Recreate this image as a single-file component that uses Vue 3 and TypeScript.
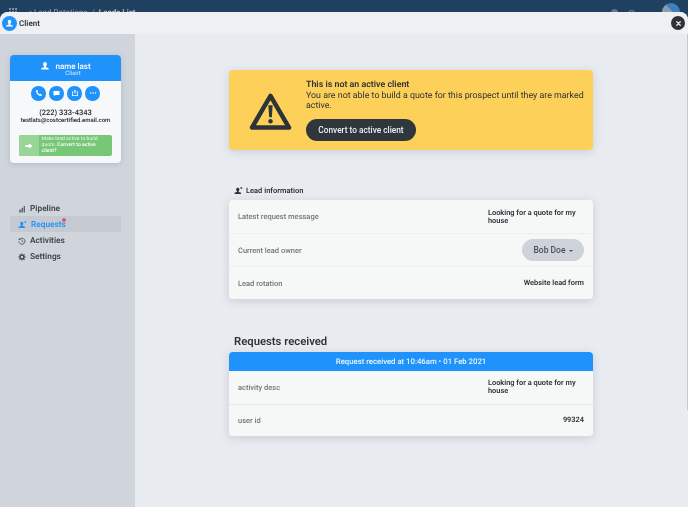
<script setup lang="ts">
interface InfoRow {
  label: string
  value: string
}

const leadRows: InfoRow[] = [
  { label: 'Latest request message', value: 'Looking for a quote for my house' },
  { label: 'Current lead owner', value: '' },
  { label: 'Lead rotation', value: 'Website lead form' }
]

const requestRows: InfoRow[] = [
  { label: 'activity desc', value: 'Looking for a quote for my house' },
  { label: 'user id', value: '99324' }
]
</script>

<template>
  <div class="page">
    <!-- dimmed app bar behind the modal -->
    <div class="app-bar">
      <svg class="grid-icon" viewBox="0 0 8 8" width="8" height="8">
        <rect x="0" y="0" width="2" height="2" /><rect x="3" y="0" width="2" height="2" /><rect x="6" y="0" width="2" height="2" />
        <rect x="0" y="3" width="2" height="2" /><rect x="3" y="3" width="2" height="2" /><rect x="6" y="3" width="2" height="2" />
        <rect x="0" y="6" width="2" height="2" /><rect x="3" y="6" width="2" height="2" /><rect x="6" y="6" width="2" height="2" />
      </svg>
      <span class="crumb">&lt; Lead Rotations &nbsp;/&nbsp; <b>Leads List</b></span>
      <span class="bar-right">
        <span class="bar-dot"></span>
        <span class="bar-ring"></span>
        <span class="bar-avatar"></span>
      </span>
    </div>

    <div class="modal">
      <header class="modal-head">
        <span class="head-badge">
          <svg viewBox="0 0 16 16" width="9" height="9"><path d="M8 1.500c1.900 0 3 1.300 3 3.200 0 1.700-.8 3.200-1.600 3.900v1.100c0 .6 3.600 1 4.600 2.300v1.500H2V12c1-1.300 4.600-1.700 4.600-2.300V8.600C5.800 7.900 5 6.400 5 4.700c0-1.900 1.100-3.200 3-3.200z" fill="#fff" /></svg>
        </span>
        <span class="head-title">Client</span>
        <button class="close-btn">
          <svg viewBox="0 0 8 8" width="5" height="5"><path d="M1.200 1.200l5.600 5.600M6.800 1.200L1.200 6.800" stroke="#e8ebf0" stroke-width="2" stroke-linecap="round" /></svg>
        </button>
      </header>

      <div class="modal-body">
        <aside class="sidebar">
          <div class="contact-card">
            <div class="contact-top">
              <svg class="contact-user" viewBox="0 0 16 16" width="10" height="10"><path d="M8 1.500c1.900 0 3 1.300 3 3.200 0 1.700-.8 3.200-1.600 3.900v1.100c0 .6 3.600 1 4.600 2.300v1.500H2V12c1-1.300 4.600-1.700 4.600-2.300V8.600C5.800 7.900 5 6.400 5 4.700c0-1.900 1.100-3.200 3-3.200z" fill="#fff" /></svg>
              <div class="contact-names">
                <div class="contact-name">name last</div>
                <div class="contact-role">Client</div>
              </div>
            </div>
            <div class="contact-actions">
              <span class="round-btn">
                <svg viewBox="0 0 16 16" width="8" height="8"><path d="M4 1.500l2.200 3-1.200 1.400c.7 1.800 2.400 3.800 4.500 4.800l1.500-1.100 3 2.300c-.5 1.500-1.600 2.300-2.800 2.100C6.200 13 2.600 8.700 2 4.300 1.900 3 2.700 2 4 1.500z" fill="#fff" /></svg>
              </span>
              <span class="round-btn">
                <svg viewBox="0 0 16 16" width="7" height="7"><path d="M1 2h14v9.500H6L3 14.500v-3H1z" fill="#fff" /></svg>
              </span>
              <span class="round-btn">
                <svg viewBox="0 0 16 16" width="8" height="8"><path d="M2 5h3v1.500H3.500v6h9v-6H11V5h3v9H2z" fill="#fff" /><path d="M8 1.500L10.500 4H9v5H7V4H5.500z" fill="#fff" /></svg>
              </span>
              <span class="round-btn">
                <svg viewBox="0 0 16 16" width="8" height="8"><circle cx="3" cy="8" r="1.500" fill="#fff" /><circle cx="8" cy="8" r="1.500" fill="#fff" /><circle cx="13" cy="8" r="1.500" fill="#fff" /></svg>
              </span>
            </div>
            <div class="contact-phone">(222) 333-4343</div>
            <div class="contact-email">testlats@costcertified.email.com</div>
            <div class="activate">
              <span class="activate-icon">
                <svg viewBox="0 0 16 16" width="8" height="8"><path d="M1 6h7V2.500L15 8l-7 5.500V10H1z" fill="#fff" /></svg>
              </span>
              <span class="activate-text">Make lead active to build quote. <b>Convert to active client?</b></span>
            </div>
          </div>

          <nav class="side-nav">
            <a class="nav-item">
              <svg viewBox="0 0 16 16" width="8" height="8"><path d="M1.500 15l1.800-6h3L5 15zM6.500 15l1-9.500h3L10 15zM11.500 15V1l2.500 1.500V15z" fill="#5d6670" /></svg>
              Pipeline
            </a>
            <a class="nav-item active">
              <svg viewBox="0 0 16 16" width="9" height="9"><path d="M7 3c1.600 0 2.600 1.100 2.600 2.800 0 1.500-.7 2.800-1.400 3.400v.9c0 .5 3.300.9 4.200 2V14H1v-1.900c.9-1.100 4.200-1.500 4.200-2v-.9C4.500 8.600 3.800 7.300 3.800 5.800 3.800 4.100 5 3 7 3z" fill="#1f93fb" /><path d="M11.500 2h3v3h-3z" fill="#1f93fb" /></svg>
              Requests
              <span class="nav-dot"></span>
            </a>
            <a class="nav-item">
              <svg viewBox="0 0 16 16" width="8" height="8"><path d="M3.500 4.500A6 6 0 1 1 2 8.500" fill="none" stroke="#3d444b" stroke-width="1.600" /><path d="M1.500 2v4h4z" fill="#3d444b" /><path d="M8 5v3.500l2.500 1.500" fill="none" stroke="#3d444b" stroke-width="1.400" /></svg>
              Activities
            </a>
            <a class="nav-item">
              <svg viewBox="0 0 16 16" width="8" height="8"><circle cx="8" cy="8" r="3.800" fill="none" stroke="#3d444b" stroke-width="2.600" /><path d="M8 .8v3M8 12.200v3M.8 8h3M12.200 8h3M2.900 2.900L5 5M11 11l2.100 2.100M13.100 2.900L11 5M5 11l-2.100 2.100" stroke="#3d444b" stroke-width="2.200" /></svg>
              Settings
            </a>
          </nav>
        </aside>

        <main class="content">
          <div class="column">
            <section class="alert">
              <svg class="alert-icon" viewBox="0 0 44 40" width="43" height="39">
                <path d="M22 4L41 36.500H3z" fill="none" stroke="#2e3338" stroke-width="4.600" stroke-linejoin="round" />
                <path d="M19.800 13.500h4.400l-.8 12.500h-2.800z" fill="#2e3338" />
                <circle cx="22" cy="30" r="2.300" fill="#2e3338" />
              </svg>
              <div class="alert-text">
                <div class="alert-title">This is not an active client</div>
                <p class="alert-msg">You are not able to build a quote for this prospect until they are marked active.</p>
                <button class="convert-btn">Convert to active client</button>
              </div>
            </section>

            <h3 class="info-title">
              <svg viewBox="0 0 16 16" width="9" height="9"><path d="M7 3c1.600 0 2.600 1.100 2.600 2.800 0 1.500-.7 2.800-1.400 3.400v.9c0 .5 3.300.9 4.200 2V14H1v-1.900c.9-1.100 4.200-1.500 4.200-2v-.9C4.500 8.600 3.800 7.300 3.800 5.800 3.800 4.100 5 3 7 3z" fill="#2e3338" /><path d="M11.500 2h3v3h-3z" fill="#2e3338" /></svg>
              Lead information
            </h3>
            <div class="panel lead-panel">
              <div v-for="row in leadRows" :key="row.label" class="row">
                <span class="row-label">{{ row.label }}</span>
                <span v-if="row.value" class="row-value">{{ row.value }}</span>
                <button v-else class="owner-btn">Bob Doe <i class="caret"></i></button>
              </div>
            </div>

            <h2 class="requests-title">Requests received</h2>
            <div class="panel">
              <div class="panel-head">Request received at 10:46am • 01 Feb 2021</div>
              <div v-for="row in requestRows" :key="row.label" class="row thin">
                <span class="row-label">{{ row.label }}</span>
                <span class="row-value">{{ row.value }}</span>
              </div>
            </div>
          </div>
          <span class="scroll-thumb"></span>
        </main>
      </div>
    </div>
  </div>
</template>

<style>
html,
body {
  margin: 0;
  height: 100%;
  overflow: hidden;
}
</style>

<style scoped>
.page {
  width: 688px;
  height: 507px;
  display: flex;
  flex-direction: column;
  background: #20405f;
  font-family: Roboto, "Open Sans", sans-serif;
  text-rendering: geometricPrecision;
  color: #2e3338;
  overflow: hidden;
  /* the reference is a soft, downscaled capture */
  filter: blur(0.45px);
}

.app-bar {
  height: 12px;
  flex: none;
  display: flex;
  align-items: flex-start;
  padding: 8px 8px 0 9px;
  box-sizing: border-box;
  overflow: hidden;
  color: #8fa3b8;
  font-size: 8px;
  line-height: 9px;
}

.grid-icon {
  fill: #7f93a8;
  flex: none;
}

.crumb {
  margin-left: 11px;
  white-space: nowrap;
}

.crumb b {
  color: #c3ccd6;
  font-weight: 500;
}

.bar-right {
  margin-left: auto;
  display: flex;
  align-items: flex-start;
  gap: 10px;
}

.bar-dot {
  width: 7px;
  height: 7px;
  margin-top: 1px;
  border-radius: 50%;
  background: #5f7790;
}

.bar-ring {
  width: 5px;
  height: 5px;
  margin-top: 2px;
  margin-right: 17px;
  border-radius: 50%;
  border: 1px solid #7f93a8;
}

.bar-avatar {
  width: 18px;
  height: 18px;
  margin-top: -5px;
  border-radius: 50%;
  background: linear-gradient(45deg, #8b9cae 55%, #3f7fbd 56%);
}

.modal {
  flex: 1;
  min-height: 0;
  display: flex;
  flex-direction: column;
  border-radius: 8px 8px 0 0;
  overflow: hidden;
  background: #e8ebf0;
}

.modal-head {
  height: 22px;
  flex: none;
  display: flex;
  align-items: center;
  padding: 0 3px 0 2px;
  background: #eef0f3;
}

.head-badge {
  width: 15px;
  height: 15px;
  border-radius: 50%;
  background: #1f93fb;
  display: flex;
  align-items: center;
  justify-content: center;
}

.head-title {
  margin-left: 2px;
  font-size: 8px;
  font-weight: 600;
}

.close-btn {
  margin-left: auto;
  width: 14px;
  height: 14px;
  padding: 0;
  border: 0;
  border-radius: 50%;
  background: #2e3338;
  display: flex;
  align-items: center;
  justify-content: center;
}

.modal-body {
  flex: 1;
  min-height: 0;
  display: flex;
}

.sidebar {
  width: 135px;
  flex: none;
  box-sizing: border-box;
  padding: 21px 14px 0 10px;
  background: #d0d5dc;
}

.contact-card {
  height: 108px;
  border-radius: 4px;
  background: #f6f8f9;
  overflow: hidden;
  box-shadow: 0 1px 5px rgba(90, 105, 125, 0.25);
}

.contact-top {
  height: 26px;
  display: flex;
  justify-content: center;
  align-items: center;
  gap: 5px;
  background: #1f93fb;
  color: #fff;
  text-align: center;
}

.contact-user {
  margin-top: -5px;
}

.contact-names {
  margin-top: 3px;
}

.contact-name {
  font-size: 8px;
  line-height: 8px;
  font-weight: 500;
}

.contact-role {
  font-size: 6px;
  line-height: 6px;
  color: #d7ebfd;
}

.contact-actions {
  display: flex;
  justify-content: center;
  gap: 3.500px;
  margin-top: 5px;
}

.round-btn {
  width: 14.500px;
  height: 14.500px;
  border-radius: 50%;
  background: #1f93fb;
  display: flex;
  align-items: center;
  justify-content: center;
}

.contact-phone {
  margin-top: 7px;
  font-size: 7.500px;
  line-height: 9px;
  font-weight: 600;
  text-align: center;
}

.contact-email {
  font-size: 6px;
  line-height: 7px;
  font-weight: 600;
  text-align: center;
  white-space: nowrap;
}

.activate {
  display: flex;
  height: 21px;
  margin: 11.500px 9px 0 8.500px;
  border-radius: 2px;
  overflow: hidden;
  background: #77c777;
}

.activate-icon {
  width: 20px;
  flex: none;
  display: flex;
  align-items: center;
  justify-content: center;
  background: #99d499;
}

.activate-text {
  width: 62px;
  padding: 2px 0 0 3px;
  font-size: 5.100px;
  line-height: 5.800px;
  color: #e8f6e8;
}

.activate-text b {
  color: #fff;
  font-weight: 500;
}

.side-nav {
  margin-top: 37px;
  display: flex;
  flex-direction: column;
}

.nav-item {
  position: relative;
  height: 16px;
  box-sizing: border-box;
  padding: 1px 0 0 8px;
  display: flex;
  align-items: center;
  gap: 4px;
  font-size: 8.300px;
  font-weight: 600;
  color: #3d444b;
}

.nav-item.active {
  color: #1f93fb;
  background: #c5cad2;
  border-radius: 2px;
}

.nav-dot {
  position: absolute;
  left: 52px;
  top: 2px;
  width: 4px;
  height: 4px;
  border-radius: 50%;
  background: #f0506e;
}

.content {
  position: relative;
  flex: 1;
  min-width: 0;
  display: flex;
  justify-content: center;
  padding: 36px 1px 0 0;
  background: #e8ebf0;
}

.scroll-thumb {
  position: absolute;
  right: 0;
  top: 0;
  bottom: 97px;
  width: 1.500px;
  background: #c6cad0;
}

.column {
  width: 364px;
}

.alert {
  height: 80px;
  box-sizing: border-box;
  display: flex;
  padding: 9.500px 0 0 20px;
  border-radius: 4px;
  background: #fdd05a;
  box-shadow: 0 2px 8px rgba(110, 120, 135, 0.22);
}

.alert-icon {
  flex: none;
  margin-top: 12.500px;
}

.alert-text {
  width: 283px;
  margin-left: 14px;
}

.alert-title {
  font-size: 8.850px;
  line-height: 11px;
  font-weight: 600;
}

.alert-msg {
  width: 281px;
  margin: 0;
  font-size: 8.850px;
  line-height: 10.500px;
}

.convert-btn {
  display: block;
  width: 110px;
  height: 22px;
  margin-top: 7.500px;
  padding: 0;
  border: 0;
  border-radius: 11px;
  background: #2f373d;
  color: #eef0f3;
  font: 500 8.300px Roboto, sans-serif;
}

.info-title {
  display: flex;
  align-items: center;
  gap: 3px;
  height: 12px;
  margin: 34px 0 4px 5px;
  font-size: 7.500px;
  font-weight: 600;
}

.panel {
  border-radius: 4px;
  overflow: hidden;
  background: #f6f8f8;
  box-shadow: 0 2px 8px rgba(110, 120, 135, 0.25);
}

.row {
  height: 33px;
  box-sizing: border-box;
  display: flex;
  align-items: center;
  justify-content: space-between;
  padding: 0 9px;
}

.lead-panel .row + .row {
  border-top: 1px solid #eceff1;
}

.row.thin {
  height: 32.500px;
}

.row.thin + .row.thin {
  border-top: 1px solid #e4e7ea;
}

.row-label {
  font-size: 7.500px;
  font-weight: 500;
  color: #6f767d;
}

.row-value {
  max-width: 96px;
  font-size: 7.400px;
  line-height: 8px;
  font-weight: 600;
  color: #2e3338;
}

.owner-btn {
  width: 62px;
  height: 22px;
  padding: 0;
  border: 0;
  border-radius: 11px;
  background: #ced3da;
  color: #4a5158;
  font: 500 8.500px Roboto, sans-serif;
}

.caret {
  display: inline-block;
  margin: 0 0 1px 1px;
  border-left: 2px solid transparent;
  border-right: 2px solid transparent;
  border-top: 2px solid #4a5158;
}

.requests-title {
  height: 14px;
  margin: 36px 0 3px 5px;
  font-size: 11.300px;
  line-height: 14px;
  font-weight: 600;
}

.panel-head {
  height: 19px;
  display: flex;
  align-items: center;
  justify-content: center;
  background: #1f93fb;
  color: #e9f5fe;
  font-size: 7.750px;
  font-weight: 500;
}
</style>
